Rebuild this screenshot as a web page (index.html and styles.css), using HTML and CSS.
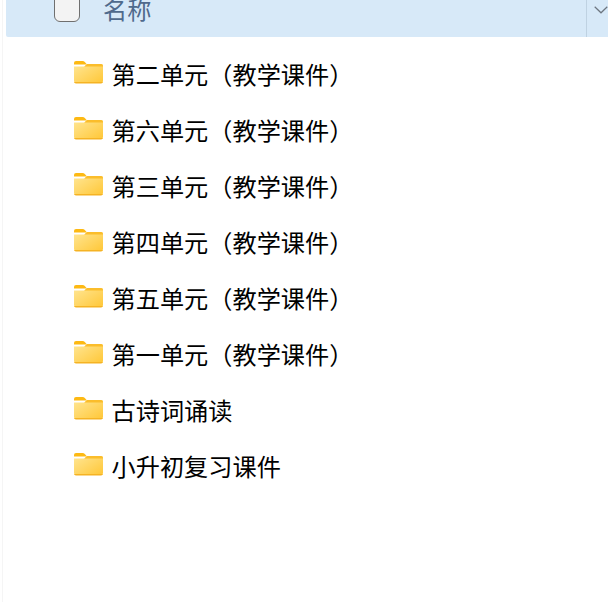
FILE: index.html
```html
<!DOCTYPE html>
<html lang="zh">
<head>
<meta charset="utf-8">
<title>文件列表</title>
<link rel="stylesheet" href="styles.css">
</head>
<body>
<svg class="defs" width="0" height="0" aria-hidden="true">
  <defs>
    <linearGradient id="fg" x1="0" y1="0" x2="1" y2="1">
      <stop offset="0" stop-color="#ffe694"/>
      <stop offset="1" stop-color="#ffc737"/>
    </linearGradient>
    <symbol id="folder" viewBox="0 0 29 23">
      <path d="M0 2a2 2 0 0 1 2-2h6.500c1 0 1.700.4 2.300 1l2.200 2.500H0z" fill="#fdb913"/>
      <path d="M0 5.500 L10 5.500 L13 3 H27 a2 2 0 0 1 2 2 V20 a2 2 0 0 1-2 2 H2 a2 2 0 0 1-2-2z" fill="url(#fg)"/>
      <path d="M13 3H27a2 2 0 0 1 2 2v.6H13.500H10.500z" fill="#fbbd2b"/>
      <path d="M0 21h29a2 2 0 0 1-2 1.400H2A2 2 0 0 1 0 21z" fill="#f5b324"/>
    </symbol>
  </defs>
</svg>
<div class="page">
  <div class="header">
    <span class="checkbox"></span>
    <span class="name-col">名称</span>
    <span class="sort-cell">
      <svg class="chevron" width="14" height="8" viewBox="0 0 14 8"><path d="M.7.7 7 6.800 13.300.7" fill="none" stroke="#6d7680" stroke-width="1.200"/></svg>
    </span>
  </div>
  <ul class="list">
    <li class="row"><svg class="icon"><use href="#folder"/></svg><span>第二单元（教学课件）</span></li>
    <li class="row"><svg class="icon"><use href="#folder"/></svg><span>第六单元（教学课件）</span></li>
    <li class="row"><svg class="icon"><use href="#folder"/></svg><span>第三单元（教学课件）</span></li>
    <li class="row"><svg class="icon"><use href="#folder"/></svg><span>第四单元（教学课件）</span></li>
    <li class="row"><svg class="icon"><use href="#folder"/></svg><span>第五单元（教学课件）</span></li>
    <li class="row"><svg class="icon"><use href="#folder"/></svg><span>第一单元（教学课件）</span></li>
    <li class="row"><svg class="icon"><use href="#folder"/></svg><span>古诗词诵读</span></li>
    <li class="row"><svg class="icon"><use href="#folder"/></svg><span>小升初复习课件</span></li>
  </ul>
</div>
</body>
</html>
```

FILE: styles.css
```css
html, body {
  margin: 0;
  padding: 0;
  height: 100%;
  overflow: hidden;
  background: #fff;
}
.defs {
  display: block;
  height: 0;
}
.page {
  height: 602px;
  margin-left: 2px;
  padding-left: 4px;
  border-left: 1px solid #f5f5f5;
  box-sizing: border-box;
  font-family: "Noto Sans CJK SC", "Liberation Sans", sans-serif;
}
.header {
  height: 37px;
  display: flex;
  align-items: flex-end;
  background: #d7e9f8;
  border-bottom-left-radius: 2px;
  margin-left: -1px;
}
.checkbox {
  box-sizing: border-box;
  width: 26px;
  height: 31px;
  margin-left: 48px;
  margin-bottom: 15px;
  margin-top: -9px;
  background: #f3f3f3;
  border: 1.500px solid #6f6f6f;
  border-radius: 6px;
}
.name-col {
  flex: 1;
  margin-left: 23px;
  height: 37px;
  font-size: 24.2px;
  line-height: 17px;
  color: #4f6a8c;
  overflow: hidden;
}
.sort-cell {
  width: 22px;
  height: 37px;
  box-sizing: border-box;
  border-left: 1px solid #bfd2e2;
  display: flex;
  padding-top: 6px;
  padding-left: 7px;
}
.chevron {
  display: block;
}
.list {
  list-style: none;
  margin: 0;
  padding: 8px 0 0 67px;
}
.row {
  height: 56px;
  display: flex;
  align-items: center;
  font-size: 24.2px;
  color: #000;
  white-space: nowrap;
}
.icon {
  width: 29px;
  height: 23px;
  margin-right: 8.500px;
  margin-top: -2px;
  flex: none;
}
```
